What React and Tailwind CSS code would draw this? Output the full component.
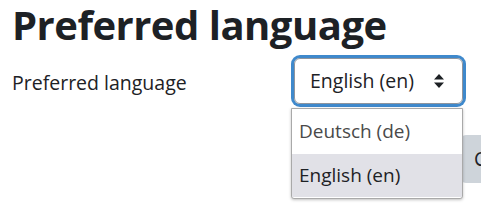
export default function App() {
  return (
    <div className="relative w-[481px] h-[212px] overflow-hidden bg-white text-[#1d2125]" style={{ fontFamily: '"Open Sans", "Noto Sans", sans-serif' }}>
      <div className="pl-[12px]">
        <h2 className="text-[40px] leading-[50px] font-bold tracking-[-0.5px] whitespace-nowrap">Preferred language</h2>

        <div className="flex items-center mt-[5px] h-[52px]">
          <label className="w-[279px] text-[19.5px] leading-[26px] pt-[4px]">Preferred language</label>
          <div className="ml-[3px] w-[169px] h-[46px] rounded-[6px] border border-[#8f959e] shadow-[0_0_0_3px_rgba(15,108,191,0.8)] flex items-center pl-[15px] pr-[18px] justify-between text-[19.5px]">
            <span>English (en)</span>
            <svg width="10" height="14" viewBox="0 0 10 14" className="text-[#1d2125]">
              <path d="M5 0 L10 5.5 H0 Z M0 8.5 H10 L5 14 Z" fill="currentColor" />
            </svg>
          </div>
        </div>

        <div className="flex mt-[28px] pl-[279px] gap-[8px]">
          <button className="shrink-0 w-[161px] h-[48px] rounded-[6px] bg-[#0f6cbf] text-white text-[19px]">Save changes</button>
          <button className="shrink-0 h-[48px] pl-[14px] pr-[14px] rounded-[6px] bg-[#ced4da] text-[#1d2125] text-[19.5px] whitespace-nowrap">Cancel</button>
        </div>
      </div>

      <div className="absolute left-[291px] top-[108px] w-[172px] h-[91px] bg-white border border-[#a9a9a9] rounded-b-[3px] shadow-[0_1px_3px_rgba(0,0,0,0.25)] text-[19px]">
        <div className="h-[45px] flex items-center pl-[7px] text-[#4a4a4a]">Deutsch (de)</div>
        <div className="h-[43px] flex items-center pl-[7px] bg-[#e1e1e7] text-[#1d2125]">English (en)</div>
      </div>
    </div>
  );
}
